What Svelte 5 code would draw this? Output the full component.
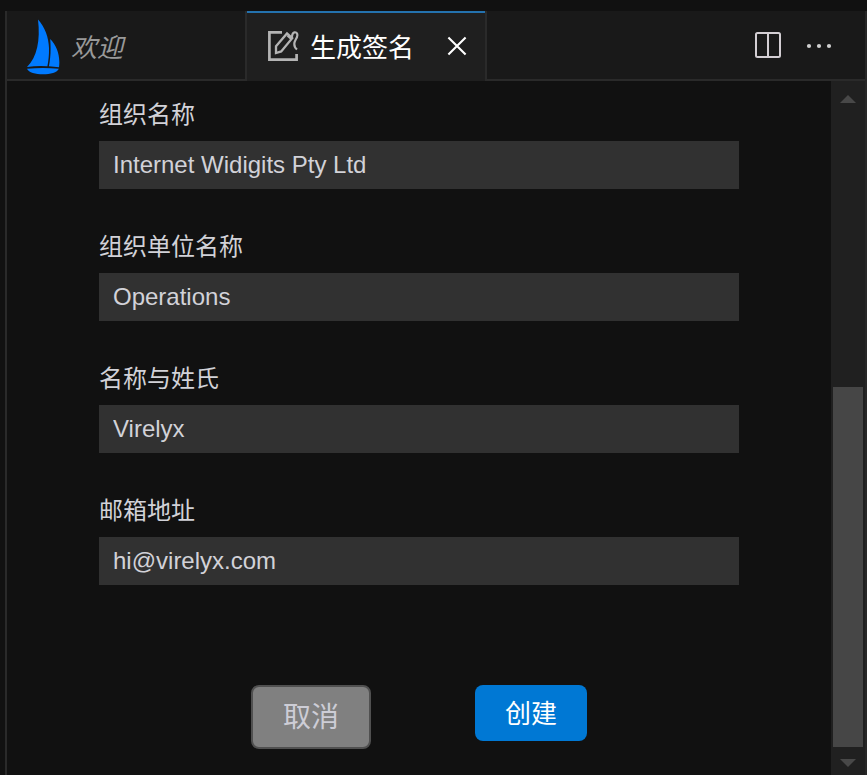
<script>
  const fields = $state([
    { id: 'org', label: '组织名称', value: 'Internet Widigits Pty Ltd' },
    { id: 'unit', label: '组织单位名称', value: 'Operations' },
    { id: 'name', label: '名称与姓氏', value: 'Virelyx' },
    { id: 'mail', label: '邮箱地址', value: 'hi@virelyx.com' }
  ]);
</script>

<div class="window">
  <div class="editor">
    <header class="tabs">
      <div class="tab welcome">
        <svg class="boat" width="34" height="58" viewBox="0 0 34 58">
          <path fill="#007aff" d="M12 0.5C19 8 22.8 19 23 29C23.2 36 22.4 42 21.4 47.2Q11 46.5 1 48C11 38 14.5 22 12 0.5Z" />
          <path fill="#007aff" d="M24.2 20C31 27 34.5 37 33 48.3Q28 47.5 22.9 47.2C24.6 39 25 30 24.2 20Z" />
          <path fill="#007aff" d="M1 49.8Q17 48.4 32.8 49.8C30 57.2 4 57.2 1 49.8Z" />
        </svg>
        <span>欢迎</span>
      </div>
      <div class="tab active">
        <svg class="edit" width="32" height="32" viewBox="0 0 32 32" fill="none" stroke="#b4b4b4">
          <path stroke-width="2.7" d="M15 2.4H2.4V29.6H29.6V24" />
          <path stroke-width="2.3" d="M9 16.2L20 3.4L25.2 8.2L14.2 21.4L9 23Z" />
          <path stroke-width="2.2" d="M20.4 5.5L24 8.8C26 7 24 3 27.5 2.3C30 2 31 4.2 30 7C29 9.5 27.3 11 27.3 14C27.3 16.5 28.3 18.2 30 19.5" />
        </svg>
        <span>生成签名</span>
        <svg class="close" width="20" height="20" viewBox="0 0 20 20" fill="none" stroke="#fff" stroke-width="2.1">
          <path d="M1.4 1.4L18.6 18.6M18.6 1.4L1.4 18.6" />
        </svg>
      </div>
      <div class="actions">
        <svg width="28" height="28" viewBox="0 0 28 28" fill="none" stroke="#d3ced3" stroke-width="2">
          <rect x="2" y="2" width="24" height="24" rx="1.5" />
          <path d="M14 2V26" />
        </svg>
        <svg class="more" width="26" height="6" viewBox="0 0 26 6" fill="#d0d0d0">
          <circle cx="3" cy="3" r="2.1" /><circle cx="13" cy="3" r="2.1" /><circle cx="23" cy="3" r="2.1" />
        </svg>
      </div>
    </header>
    <div class="body">
      <form onsubmit={(e) => e.preventDefault()}>
        {#each fields as field (field.id)}
          <div class="field">
            <label for={field.id}>{field.label}</label>
            <input id={field.id} bind:value={field.value} />
          </div>
        {/each}
        <div class="buttons">
          <button type="button" class="cancel">取消</button>
          <button type="submit" class="create">创建</button>
        </div>
      </form>
      <div class="scrollbar">
        <svg width="16" height="8" viewBox="0 0 16 8"><path d="M0 8L8 0L16 8Z" fill="#484848" /></svg>
        <div class="thumb"></div>
        <svg width="16" height="8" viewBox="0 0 16 8"><path d="M0 0L8 8L16 0Z" fill="#484848" /></svg>
      </div>
    </div>
  </div>
</div>

<style>
  :global(body) {
    background: #111;
  }
  .window,
  .window * {
    box-sizing: border-box;
  }
  .window {
    height: 775px;
    padding: 11px 0 0 5px;
    background: #111;
    color: #d2d2d8;
    font-family: "Liberation Sans", "Noto Sans CJK SC", sans-serif;
    overflow: hidden;
  }
  .editor {
    height: 764px;
    display: flex;
    flex-direction: column;
    border-left: 2px solid #2a2a2a;
    border-right: 2px solid #272727;
  }
  .tabs {
    height: 70px;
    display: flex;
    background: #191919;
    font-size: 26px;
    line-height: 38px;
    white-space: nowrap;
  }
  .tab {
    display: flex;
    align-items: center;
    border-bottom: 2px solid #2a2a2a;
  }
  .welcome {
    width: 238px;
    padding-left: 19px;
    color: #999;
    font-style: italic;
  }
  .welcome span {
    margin: 5px 0 0 11px;
  }
  .boat {
    margin-top: 5px;
  }
  .active {
    width: 242px;
    padding: 2px 0 2px 20px;
    background: #1f1f1f;
    color: #fff;
    border: solid #2a2a2a;
    border-width: 0 2px;
    box-shadow: inset 0 2px #2472ae;
  }
  .active span {
    margin: 3px 0 0 11px;
  }
  .close {
    margin-left: 33px;
    margin-bottom: 1px;
  }
  .actions {
    flex: 1;
    display: flex;
    align-items: center;
    justify-content: flex-end;
    gap: 24px;
    padding-right: 33px;
    border-bottom: 2px solid #2a2a2a;
  }
  .more {
    margin-top: 2px;
  }
  .body {
    flex: 1;
    min-height: 0;
    display: flex;
  }
  form {
    flex: 1;
    padding: 16px 92px 0;
  }
  .field {
    height: 132px;
  }
  label {
    display: block;
    height: 44px;
    font-size: 24px;
    line-height: 36px;
  }
  input {
    display: block;
    width: 640px;
    height: 48px;
    padding: 0 14px;
    border: 0;
    outline: 0;
    background: #313131;
    color: inherit;
    font: 24px "Liberation Sans", "Noto Sans CJK SC", sans-serif;
  }
  .buttons {
    display: flex;
    align-items: flex-start;
    gap: 104px;
    padding: 60px 0 0 152px;
  }
  button {
    padding: 0 0 4px;
    font-family: inherit;
    border-radius: 8px;
    white-space: nowrap;
  }
  .cancel {
    width: 120px;
    height: 64px;
    border: 2px solid #505050;
    background: #808080;
    color: #cdcdd6;
    font-size: 28px;
  }
  .create {
    width: 112px;
    height: 56px;
    border: 0;
    background: #0078d4;
    color: #fff;
    font-size: 26px;
  }
  .scrollbar {
    width: 34px;
    display: flex;
    flex-direction: column;
    align-items: center;
    justify-content: space-between;
    padding: 14px 0 8px;
    background: #202020;
  }
  .thumb {
    width: 30px;
    height: 360px;
    margin: auto 0 12px;
    background: #464646;
  }
</style>
